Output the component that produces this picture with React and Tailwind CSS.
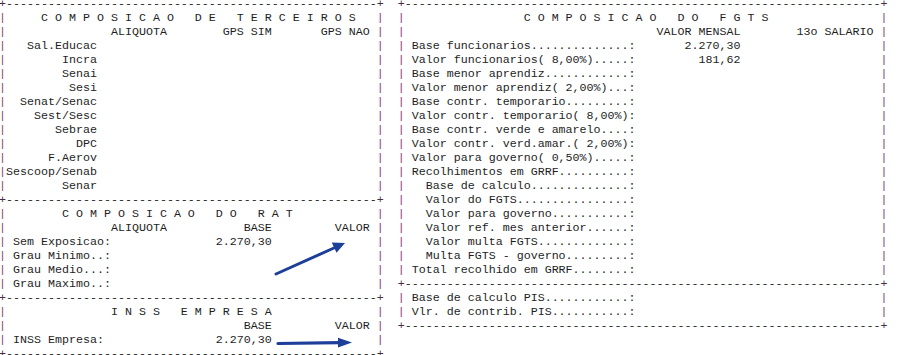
const LW = 55;
const RW = 70;

const rule = (w) => '+' + '-'.repeat(w - 2) + '+';

const line = (w, items = []) => {
  const a = Array(w).fill(' ');
  a[0] = '|';
  a[w - 1] = '|';
  for (const [col, txt] of items) {
    for (let i = 0; i < txt.length; i++) a[col + i] = txt[i];
  }
  return a.join('');
};

const terceiros = ['Sal.Educac', 'Incra', 'Senai', 'Sesi', 'Senat/Senac', 'Sest/Sesc', 'Sebrae', 'DPC', 'F.Aerov', 'Sescoop/Senab', 'Senar'];

const leftLines = [
  rule(LW),
  line(LW, [[6, 'C O M P O S I C A O   D E   T E R C E I R O S']]),
  line(LW, [[16, 'ALIQUOTA'], [32, 'GPS SIM'], [46, 'GPS NAO']]),
  ...terceiros.map((t) => line(LW, [[14 - t.length, t]])),
  rule(LW),
  line(LW, [[9, 'C O M P O S I C A O   D O   R A T']]),
  line(LW, [[16, 'ALIQUOTA'], [35, 'BASE'], [48, 'VALOR']]),
  line(LW, [[2, 'Sem Exposicao:'], [31, '2.270,30']]),
  line(LW, [[2, 'Grau Minimo..:']]),
  line(LW, [[2, 'Grau Medio...:']]),
  line(LW, [[2, 'Grau Maximo..:']]),
  rule(LW),
  line(LW, [[16, 'I N S S   E M P R E S A']]),
  line(LW, [[35, 'BASE'], [48, 'VALOR']]),
  line(LW, [[2, 'INSS Empresa:'], [31, '2.270,30']]),
  rule(LW),
];

// label padded with dots up to the colon, value right-aligned under VALOR MENSAL
const fgts = (label, val) =>
  line(RW, [[2, label.padEnd(31, '.') + ':'], ...(val ? [[49 - val.length, val]] : [])]);

const rightLines = [
  rule(RW),
  line(RW, [[18, 'C O M P O S I C A O   D O   F G T S']]),
  line(RW, [[37, 'VALOR MENSAL'], [57, '13o SALARIO']]),
  fgts('Base funcionarios', '2.270,30'),
  fgts('Valor funcionarios( 8,00%)', '181,62'),
  fgts('Base menor aprendiz'),
  fgts('Valor menor aprendiz( 2,00%)'),
  fgts('Base contr. temporario'),
  fgts('Valor contr. temporario( 8,00%)'),
  fgts('Base contr. verde e amarelo'),
  fgts('Valor contr. verd.amar.( 2,00%)'),
  fgts('Valor para governo( 0,50%)'),
  fgts('Recolhimentos em GRRF'),
  fgts('  Base de calculo'),
  fgts('  Valor do FGTS'),
  fgts('  Valor para governo'),
  fgts('  Valor ref. mes anterior'),
  fgts('  Valor multa FGTS'),
  fgts('  Multa FGTS - governo'),
  fgts('Total recolhido em GRRF'),
  rule(RW),
  fgts('Base de calculo PIS'),
  fgts('Vlr. de contrib. PIS'),
  rule(RW),
];

function Row({ text }) {
  return (
    <div className="h-[14px] whitespace-pre">
      {text.split(/([|+])/).map((s, i) => {
        if (s === '|') return <span key={i} className="text-[#8e3d76]">|</span>;
        if (s === '+') return <span key={i} className="text-[#4b2a45]">+</span>;
        return s;
      })}
    </div>
  );
}

function Panel({ lines }) {
  return (
    <div className="flex flex-col">
      {lines.map((l, i) => (
        <Row key={i} text={l} />
      ))}
    </div>
  );
}

export default function App() {
  return (
    <div className="relative w-[919px] h-[355px] overflow-hidden bg-white">
      <div className="flex gap-[14px] -mt-[3px] -ml-px font-['Liberation_Mono','Courier_New',monospace] text-[11.667px] leading-[14px] text-[#1e1e1e]">
        <Panel lines={leftLines} />
        <Panel lines={rightLines} />
      </div>

      <svg className="absolute left-0 top-0 pointer-events-none" width="919" height="355" viewBox="0 0 919 355">
        <line x1="276" y1="274" x2="335" y2="247.5" stroke="#1e3f99" strokeWidth="3" strokeLinecap="round" />
        <polygon points="345,243 336.5,252.8 331.8,242.5" fill="#1e3f99" />
        <line x1="278" y1="343.5" x2="340" y2="342.7" stroke="#1e3f99" strokeWidth="3.2" strokeLinecap="round" />
        <polygon points="352,342.5 338,337.8 338,347.4" fill="#1e3f99" />
      </svg>
    </div>
  );
}
